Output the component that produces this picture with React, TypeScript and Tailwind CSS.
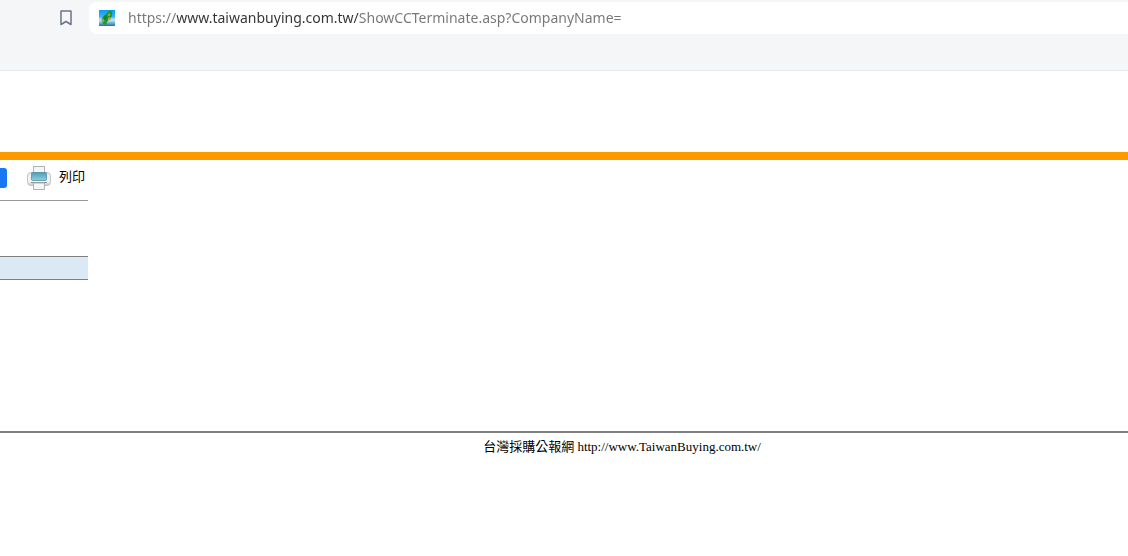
import React, { useState } from "react";

function BookmarkIcon() {
  return (
    <svg viewBox="0 0 12 16" className="h-4 w-3" fill="none" stroke="#6b7689" strokeWidth="1.5" aria-hidden="true">
      <path d="M1 1h10v13.500L6 11.500l-5 3z" strokeLinejoin="round" />
    </svg>
  );
}

function SiteIcon() {
  return (
    <svg viewBox="0 0 16 16" className="size-4 shrink-0" aria-hidden="true">
      <defs>
        <linearGradient id="sky" x1="0" y1="0" x2="0" y2="1">
          <stop offset="0" stopColor="#0a9cf5" />
          <stop offset="0.4" stopColor="#35b0f5" />
          <stop offset="0.62" stopColor="#c5e8fa" />
          <stop offset="0.75" stopColor="#8fc4e4" />
          <stop offset="1" stopColor="#1a70b5" />
        </linearGradient>
      </defs>
      <rect width="16" height="16" fill="url(#sky)" />
      <path d="M10 0.5l3 0.5v5l-2 3-2.500 2-1.500 4-3-1-1.500-4 1-3 3-2.500z" fill="#1e9a34" />
      <path d="M9.500 3.500l2 0.500-1 2H9zM9 8l2.500-1 0.500 2.500-3 1zM3 8.500l2.500 1.500-0.500 2L3.500 12z" fill="#b9a544" />
      <path d="M6 5l2 1-1.500 5-1.500-2z" fill="#128033" />
    </svg>
  );
}

function PrinterIcon() {
  return (
    <svg viewBox="0 0 24 24" className="size-6 shrink-0" aria-hidden="true">
      <defs>
        <linearGradient id="body" x1="0" y1="0" x2="0" y2="1">
          <stop offset="0" stopColor="#eceeef" />
          <stop offset="0.7" stopColor="#f3f4f5" />
          <stop offset="1" stopColor="#c3c6c9" />
        </linearGradient>
        <linearGradient id="glass" x1="0" y1="0" x2="0" y2="1">
          <stop offset="0" stopColor="#4d9db8" />
          <stop offset="1" stopColor="#8fcfe1" />
        </linearGradient>
      </defs>
      <rect x="6.5" y="0.5" width="11" height="8" fill="#f3f5f6" stroke="#b0b3b6" />
      <rect x="0.5" y="6.5" width="23" height="13" rx="3.5" fill="url(#body)" stroke="#b5b8ba" strokeWidth="0.8" />
      <rect x="4.5" y="6.5" width="15" height="8" rx="1" fill="url(#glass)" stroke="#5590a4" strokeWidth="0.8" />
      <path d="M4 16.500h16" stroke="#8a8f93" />
      <path d="M6.500 17h11v6.500h-11z" fill="#f5f6f6" stroke="#b0b3b6" />
    </svg>
  );
}

export default function App() {
  const [address, setAddress] = useState(
    "https://www.taiwanbuying.com.tw/ShowCCTerminate.asp?CompanyName="
  );

  return (
    <div className="min-h-screen overflow-hidden bg-white text-black">
      <header className="border-b border-[#e8e9ed] bg-[#f5f6f8] pt-0.5 pb-9">
        <div className="flex h-8 items-center pl-[60px]">
          <button type="button" aria-label="Bookmark" className="mr-[17px]">
            <BookmarkIcon />
          </button>
          <div className="flex h-8 min-w-0 flex-1 items-center gap-[13px] rounded-l-lg bg-white pl-2.5">
            <SiteIcon />
            <input
              type="text"
              aria-label="Address"
              spellCheck={false}
              value={address}
              onChange={(e) => setAddress(e.target.value)}
              className="h-8 min-w-0 flex-1 bg-[linear-gradient(to_right,#767676_49px,#333333_49px,#333333_231px,#767676_231px)] bg-clip-text pb-0.5 font-['Noto_Sans',sans-serif] text-[14px] text-transparent caret-black outline-none"
            />
          </div>
        </div>
      </header>

      <main className="pt-[81px]">
        <div className="h-2 bg-[#ff9900]" />
        <div className="w-[88px]">
          <div className="flex h-[41px] items-center border-b border-[#999999] pb-1">
            <button type="button" aria-label="Share" className="h-5 w-[7px] rounded-r-[3px] bg-[#1877f2]" />
            <button
              type="button"
              className="ml-5 flex items-center gap-2 font-['Noto_Sans_CJK_TC',sans-serif] text-[13px] leading-5 whitespace-nowrap"
            >
              <PrinterIcon />
              <span className="pb-1">列印</span>
            </button>
          </div>
          <div className="mt-[55px] h-6 border-y border-[#808080] bg-[#dbe9f4]" />
        </div>
      </main>

      <footer className="mt-[151px] border-t-2 border-[#808080] pt-1 pl-[116px] text-center font-['Liberation_Serif','Noto_Sans_CJK_TC',serif] text-[13px] leading-5">
        台灣採購公報網 <a href="http://www.TaiwanBuying.com.tw/">http://www.TaiwanBuying.com.tw/</a>
      </footer>
    </div>
  );
}
